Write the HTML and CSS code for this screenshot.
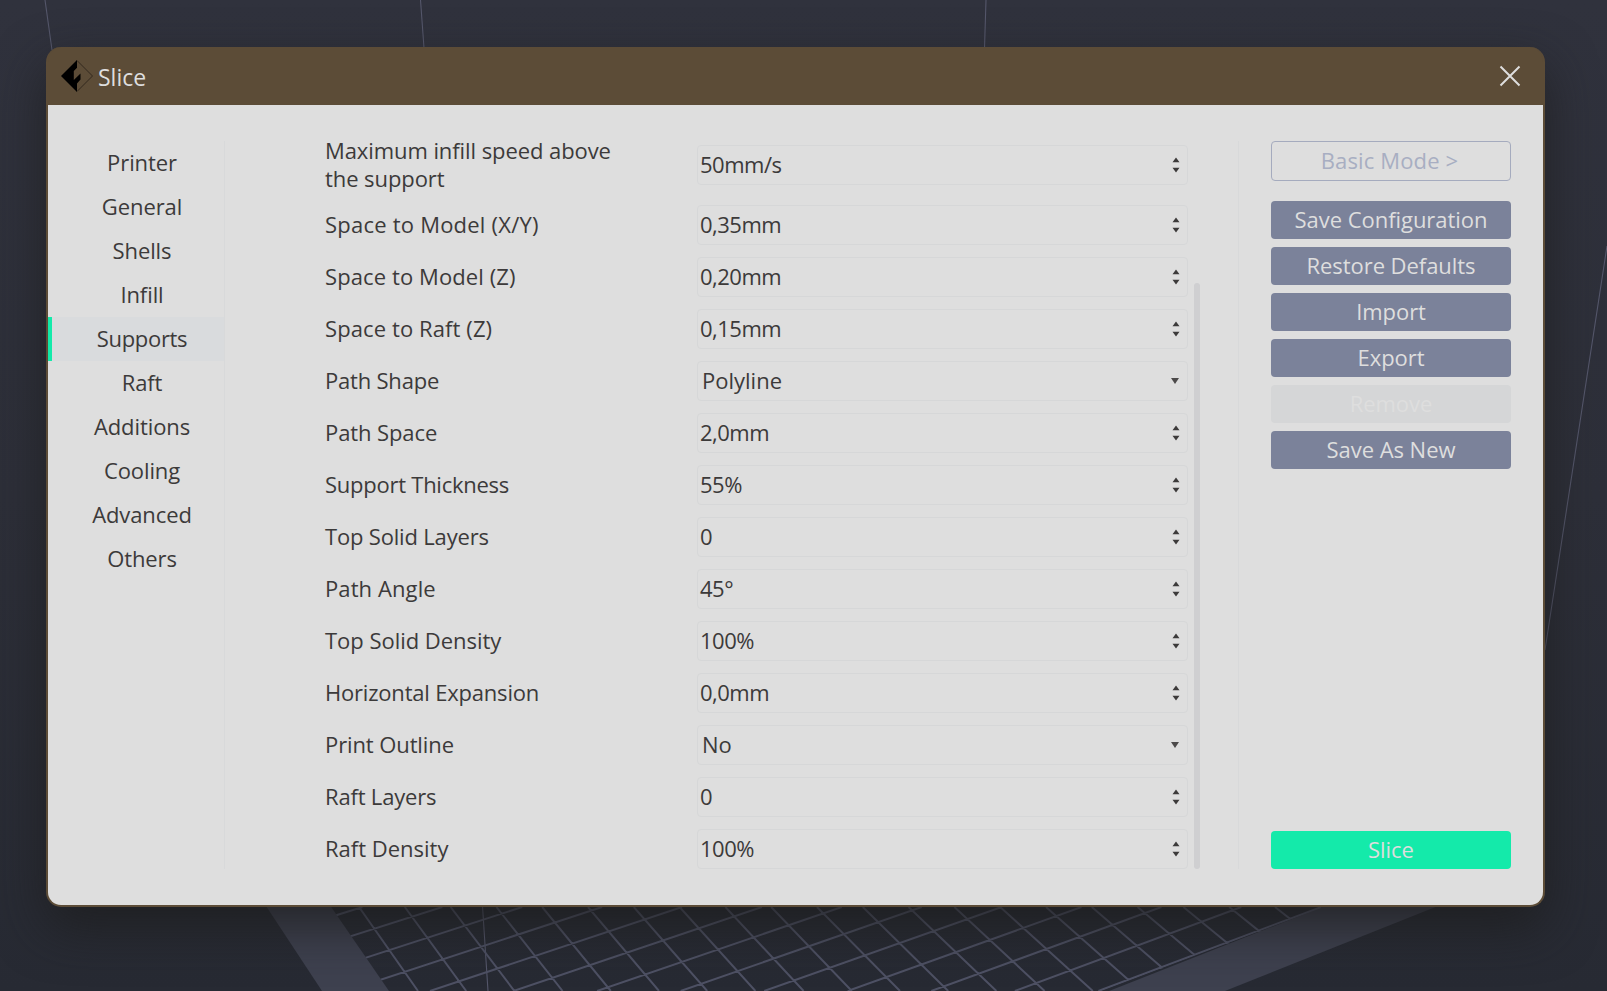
FILE: index.html
```html
<!DOCTYPE html>
<html lang="en">
<head>
<meta charset="utf-8">
<title>Slice</title>
<link rel="stylesheet" href="styles.css">
</head>
<body>
<svg class="scene" viewBox="0 0 1607 991" aria-hidden="true">
  <defs>
    <clipPath id="bed"><polygon points="331,907 1325,907 1102,991 389,991"/></clipPath>
  </defs>
  <g class="guide">
    <path d="M45 0L52 50M420.5 0L424 48M986 0L984.500 48M1607 246L1545 650M482.500 906L488 991"/>
  </g>
  <polygon class="rim" points="266,906 330.500,906 389,991 322,991"/>
  <polygon class="rim" points="1325,906 1438,906 1225,991 1109,991"/>
  <g id="grid" class="grid" clip-path="url(#bed)"></g>
</svg>
<main class="dialog">
  <header class="titlebar">
    <svg class="logo" viewBox="0 0 32 32"><path d="M16 .5L31.500 16 16 31.500" fill="none" stroke="#33291e"/><path d="M16 0L0 16l16 16v-8.500l3.500-4V13.500L12.800 20v-9L16 7.700z"/></svg>
    <span class="title">Slice</span>
    <svg class="close" viewBox="0 0 22 22"><path d="M1.500 1.500l19 19M20.500 1.500l-19 19"/></svg>
  </header>
  <div class="content">
    <nav class="tabs">
      <a class="tab">Printer</a><a class="tab">General</a><a class="tab">Shells</a><a class="tab">Infill</a><a class="tab active">Supports</a><a class="tab">Raft</a><a class="tab">Additions</a><a class="tab">Cooling</a><a class="tab">Advanced</a><a class="tab">Others</a>
    </nav>
    <section class="form" id="form"></section>
    <div class="scroll"><div class="thumb"></div></div>
    <aside class="actions">
      <button class="btn outline">Basic Mode &gt;</button>
      <button class="btn">Save Configuration</button>
      <button class="btn">Restore Defaults</button>
      <button class="btn">Import</button>
      <button class="btn">Export</button>
      <button class="btn disabled">Remove</button>
      <button class="btn">Save As New</button>
      <button class="btn primary">Slice</button>
    </aside>
  </div>
</main>
<script src="app.js"></script>
</body>
</html>
```

FILE: styles.css
```css
* { box-sizing: border-box; }
body {
  margin: 0;
  width: 1607px;
  height: 991px;
  overflow: hidden;
  padding: 47px 0 0 46px;
  background: linear-gradient(#30323d, #2d2f39 50%, #272a33);
  color: #3c3a3a;
  font: 22px/28px "Open Sans", "Noto Sans", sans-serif;
}
.scene { position: absolute; left: 0; top: 0; width: 1607px; height: 991px; }
.guide { fill: none; stroke: #55576b; stroke-width: 1.1; }
.rim { fill: #3e414f; }
.grid { fill: none; stroke: #4e5164; stroke-width: 2; }
.dialog {
  position: relative;
  width: 1499px;
  height: 860px;
  border: 2px solid #5c4c37;
  border-top: 0;
  border-radius: 15px;
  background: linear-gradient(#5c4c37 58px, #dedede 58px);
  overflow: hidden;
  box-shadow: 0 20px 50px rgba(28, 28, 28, .75);
}
.titlebar {
  height: 58px;
  display: flex;
  align-items: center;
  padding: 0 22px 0 13px;
  color: #dedede;
}
.logo { width: 32px; height: 32px; }
.title { margin: 1px 0 0 5px; font-size: 23px; letter-spacing: 0; }
.close { width: 22px; height: 22px; margin-left: auto; fill: none; stroke: #dedede; stroke-width: 2; }
.content { display: flex; height: 800px; padding: 36px 32px 36px 0; }
.tabs { width: 177px; border-right: 1px solid #d8d9da; }
.tab {
  display: block;
  height: 44px;
  line-height: 42px;
  padding-left: 8px;
  border-left: 4px solid transparent;
  text-align: center;
  letter-spacing: -.1px;
}
.active { border-left-color: #14eaaa; background: #d9dbdd; letter-spacing: -.3px; }
.form { width: 963px; padding: 0 0 0 100px; }
.row { height: 40px; display: flex; align-items: center; margin-bottom: 12px; }
.row:first-child { height: 48px; margin-bottom: 16px; }
.label { width: 372px; padding: 0 70px 2px 0; }
.field {
  width: 491px;
  height: 40px;
  border: 1px solid #d6d7d8;
  border-radius: 4px;
  display: flex;
  align-items: center;
  justify-content: space-between;
  padding: 0 7px 0 2px;
  letter-spacing: -.5px;
}
.value { padding-bottom: 2px; }
.combo { padding-left: 4px; letter-spacing: 0; }
.arrows { width: 8px; height: 16px; fill: #3c3a3a; }
.combo .arrows { margin-right: 1px; fill: #4c4a4a; }
.scroll { width: 51px; border-right: 1px solid #d8d9da; padding: 142px 0 0 6px; }
.thumb { width: 6px; height: 586px; border-radius: 3px; background: #cfcfd1; }
.actions { margin-left: auto; width: 240px; display: flex; flex-direction: column; gap: 8px; }
.btn {
  height: 38px;
  flex: none;
  border: 0;
  border-radius: 4px;
  padding: 0 0 2px;
  background: #7b829a;
  color: #dedede;
  font: inherit;
  letter-spacing: -.05px;
}
.outline { height: 40px; margin-bottom: 12px; padding-right: 3px; border: 1px solid #a5abbe; background: transparent; color: #a8aec2; letter-spacing: .15px; }
.disabled { background: #d5d6d7; }
.primary { margin-top: auto; background: #14eaaa; }
```

FILE: app.js
```js
// Each setting: label, value, letter tracking in px, and whether it is a drop-down.
const settings = [
  ["Maximum infill speed above the support", "50mm/s", -0.08],
  ["Space to Model (X/Y)", "0,35mm", 0.22],
  ["Space to Model (Z)", "0,20mm", 0.1],
  ["Space to Raft (Z)", "0,15mm", 0.1],
  ["Path Shape", "Polyline", -0.2, true],
  ["Path Space", "2,0mm", -0.1],
  ["Support Thickness", "55%", -0.25],
  ["Top Solid Layers", "0", -0.18],
  ["Path Angle", "45°", 0.1],
  ["Top Solid Density", "100%", -0.03],
  ["Horizontal Expansion", "0,0mm", -0.2],
  ["Print Outline", "No", -0.1, true],
  ["Raft Layers", "0", -0.18],
  ["Raft Density", "100%", 0]
];
const spin = "M4 .6L7.500 5.200h-7zM4 15.400l-3.500-4.600h7z";
const drop = "M0 5h8l-4 6z";
document.getElementById("form").innerHTML = settings.map(([label, value, tracking, combo]) =>
  `<div class="row"><span class="label" style="letter-spacing:${tracking}px">${label}</span><div class="field${combo ? " combo" : ""}"><span class="value">${value}</span><svg class="arrows" viewBox="0 0 8 16"><path d="${combo ? drop : spin}"/></svg></div></div>`
).join("");

// Print bed: two families of perspective lines.
let d = "";
for (let i = 0; i <= 20; i++) d += `M${359 + 45.8 * i} 907L${418 + 48.2 * i} 991`;
for (let k = -4; k <= 8; k++) d += `M${682 + 79.9 * k} 907L${430 + 83.55 * k} 991`;
document.getElementById("grid").innerHTML = `<path d="${d}"/>`;
```
